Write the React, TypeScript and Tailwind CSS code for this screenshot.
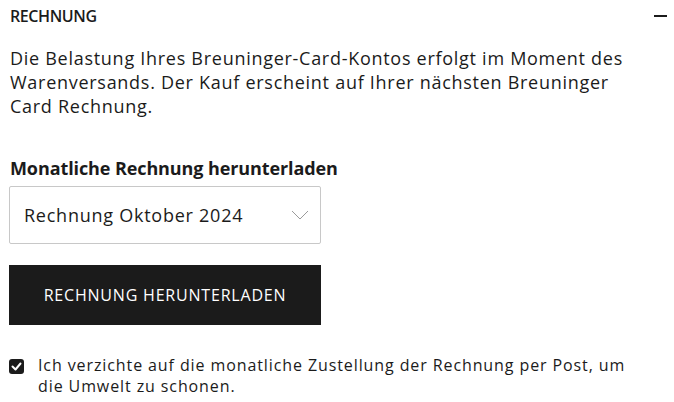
import React from "react"

export default function App() {
  return (
    <div className="w-[674px] h-[402px] bg-white text-[#1b1b1b] overflow-hidden" style={{ fontFamily: '"Open Sans", sans-serif' }}>
      <div className="flex items-center justify-between pl-[10px] pr-[7px] h-[31px]">
        <span className="text-[16px] font-semibold tracking-[-0.4px]">RECHNUNG</span>
        <span className="block w-[13px] h-[2px] bg-[#1b1b1b]" />
      </div>
      <p className="mt-[15px] pl-[10px] w-[632px] text-[18px] leading-[24px] tracking-[0.72px]">
        Die Belastung Ihres Breuninger-Card-Kontos erfolgt im Moment des Warenversands. Der Kauf erscheint auf Ihrer nächsten Breuninger Card Rechnung.
      </p>
      <div className="pl-[9px] mt-[38px]">
        <div className="text-[18px] font-bold leading-[24px] pl-[1px] tracking-[-0.1px] whitespace-nowrap">Monatliche Rechnung herunterladen</div>
        <div className="w-[312px]">
          <div className="mt-[6px] h-[58px] border border-[#c8c8c8] rounded-[2px] flex items-center justify-between pl-[14px] pr-[11px]">
            <span className="text-[18px] tracking-[0.75px]">Rechnung Oktober 2024</span>
            <svg width="18" height="10" viewBox="0 0 18 10" fill="none">
              <path d="M1 1l8 8 8-8" stroke="#9a9a9a" strokeWidth="1" />
            </svg>
          </div>
          <button className="mt-[21px] w-full h-[60px] bg-[#1b1b1b] text-white text-[16px] font-medium tracking-[0.8px]">
            RECHNUNG HERUNTERLADEN
          </button>
        </div>
      </div>
      <label className="mt-[30px] pl-[9px] flex items-start gap-[14px]">
        <span className="mt-[4px] shrink-0 w-[15px] h-[15px] rounded-[3px] bg-[#1b1b1b] flex items-center justify-center">
          <svg width="11" height="9" viewBox="0 0 11 9" fill="none">
            <path d="M1.5 4.5l3 3 5-6" stroke="white" strokeWidth="2" strokeLinecap="round" strokeLinejoin="round" />
          </svg>
        </span>
        <span className="w-[600px] text-[16px] leading-[21px] tracking-[0.9px]">
          Ich verzichte auf die monatliche Zustellung der Rechnung per Post, um die Umwelt zu schonen.
        </span>
      </label>
    </div>
  )
}
